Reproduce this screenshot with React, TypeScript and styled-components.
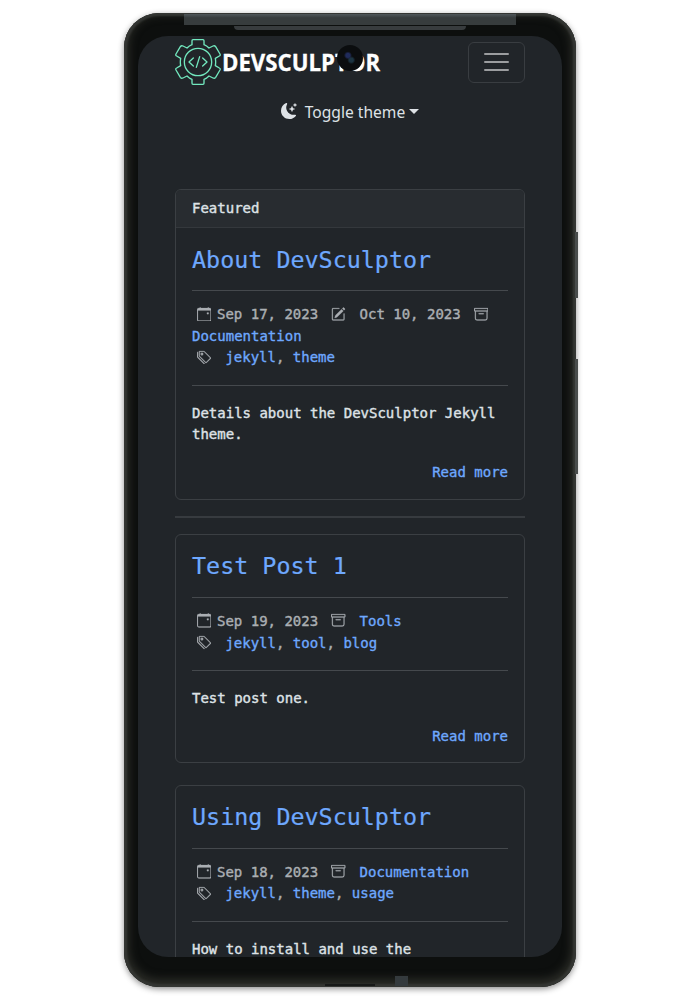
import React from 'react';
import styled, { createGlobalStyle } from 'styled-components';
import { BsArchive, BsCalendarEvent, BsMoonStarsFill, BsPencilSquare, BsTags } from 'react-icons/bs';

const GlobalStyle = createGlobalStyle`
  * { box-sizing: border-box; }
  body { margin: 0; background: #fff; overflow: hidden; }
`;

const Stage = styled.main`
  display: flex;
  justify-content: center;
  height: 1000px;
  padding-top: 13px;
`;

const Phone = styled.div`
  position: relative;
  width: 452px;
  height: 974px;
  padding: 23px 14px 30px;
  border-radius: 35px;
  background: #0d0f0e;
  box-shadow: inset 0 0 2px 3px #343633, inset 0 -3px 8px 5px #2b2c27, 0 2px 6px rgba(0, 0, 0, 0.45);
`;

const Trim = styled.div<{ $x: number; $y: number; $w: number; $h: number; $c?: string; $r?: string }>`
  position: absolute;
  left: ${p => p.$x}px;
  top: ${p => p.$y}px;
  width: ${p => p.$w}px;
  height: ${p => p.$h}px;
  background: ${p => p.$c ?? '#484c4b'};
  border-radius: ${p => p.$r ?? '0'};
`;

const Screen = styled.div`
  height: 921px;
  padding: 0 37px;
  overflow: hidden;
  border-radius: 30px;
  background: #212529;
  color: #dee2e6;
  font-family: 'DejaVu Sans Mono', monospace;
  font-size: 14px;
  line-height: 21.7px;
`;

const Camera = styled.div`
  position: absolute;
  left: 213px;
  top: 32px;
  width: 26px;
  height: 26px;
  border-radius: 50%;
  background: radial-gradient(circle at 42% 40%, #202b5b 0 2px, transparent 4px),
    radial-gradient(circle at 55% 58%, #1c3442 0 2px, transparent 4px), #0b0d0f;
`;

const NavBar = styled.header`
  display: flex;
  align-items: center;
  justify-content: space-between;
  height: 52px;
`;

const Brand = styled.div`
  display: flex;
  align-items: center;
  gap: 1px;
`;

const BrandName = styled.span`
  width: 160px;
  color: #fff;
  font: 700 23px/30px 'Open Sans', sans-serif;
  white-space: nowrap;
  transform: scaleX(0.965);
  transform-origin: left;
  -webkit-text-stroke: 0.3px;
`;

const MenuButton = styled.button`
  display: flex;
  flex-direction: column;
  align-items: center;
  justify-content: center;
  gap: 6px;
  width: 57px;
  height: 41px;
  padding: 0;
  border: 1px solid #393d41;
  border-radius: 6px;
  background: none;
`;

const MenuLine = styled.span`
  width: 25px;
  height: 2px;
  border-radius: 1px;
  background: #9b9d9f;
`;

const ThemeToggle = styled.div`
  display: flex;
  align-items: center;
  justify-content: center;
  height: 46px;
  margin-bottom: 55px;
  font: 400 15.6px/24px 'Noto Sans', sans-serif;
`;

const ToggleLabel = styled.span`
  margin: 1px 4px 0 8px;
`;

const Caret = styled.span`
  border: 5px solid transparent;
  border-top-color: #dee2e6;
  border-bottom: 0;
`;

const Card = styled.article`
  margin-bottom: 21.5px;
  border: 1px solid #3b3f43;
  border-radius: 6px;
`;

const CardHeader = styled.div`
  height: 38px;
  padding: 8px 16px;
  border-bottom: 1px solid #34383c;
  border-radius: 5px 5px 0 0;
  background: #282c30;
  -webkit-text-stroke: 0.4px;
`;

const CardBody = styled.div`
  padding: 0 16px 15px;
  -webkit-text-stroke: 0.4px;
`;

const Title = styled.h2`
  display: flex;
  align-items: center;
  height: 62px;
  margin: 0;
  padding-top: 3px;
  color: #6ea8fe;
  font-size: 23.36px;
  font-weight: 400;
  -webkit-text-stroke: 0.2px;
`;

const Rule = styled.hr`
  height: 1px;
  margin: 0;
  border: 0;
  background: #45494d;
`;

const Meta = styled.div`
  padding: 13px 0 15.6px;
  color: #abafb3;
`;

const MetaLine = styled.div`
  svg {
    width: 14.4px;
    height: 14.4px;
    vertical-align: -2px;
    stroke-width: 0.2;
  }
`;

const MetaIcon = styled.span<{ $before: number; $after: number }>`
  display: inline-block;
  height: 16px;
  line-height: 16px;
  margin: 0 ${p => p.$after}px 0 ${p => p.$before}px;
`;

const Link = styled.a`
  color: #6ea8fe;
  -webkit-text-stroke: 0.35px;
`;

const Excerpt = styled.p`
  margin: 17px 0 16px;
`;

const ReadMore = styled(Link)`
  display: block;
  text-align: right;
`;

const SectionRule = styled(Rule)`
  height: 2px;
  margin: -5.5px 0 16px;
  background: #373b3f;
`;

function Gear() {
  return (
    <svg width="46" height="48" viewBox="8 6 138 144" fill="none" stroke="#72e8be" strokeWidth="4" strokeLinejoin="round" strokeLinecap="round">
      <path d="M60 11H90Q93 11 93 14V26Q101 29 108 36L120 30Q125 28 128 32L141 54Q143 58 139 60L127 67Q129 78 127 89L139 96Q143 98 141 102L128 124Q125 128 120 126L108 120Q101 127 93 130V142Q93 145 90 145H60Q57 145 57 142V130Q49 127 42 120L30 126Q25 128 22 124L9 102Q7 98 11 96L23 89Q21 78 23 67L11 60Q7 58 9 54L22 32Q25 28 30 30L42 36Q49 29 57 26V14Q57 11 60 11Z" transform="translate(2 0)" />
      <circle cx="77" cy="78" r="41" />
      <path d="m63 66-13 12 13 12m28-24 13 12-13 12m-9-28-10 32" />
    </svg>
  );
}

type Post = { title: string; date: string; updated?: string; category: string; tags: string[]; excerpt: string; featured?: boolean; more?: boolean };

const posts: Post[] = [
  { title: 'About DevSculptor', date: 'Sep 17, 2023', updated: 'Oct 10, 2023', category: 'Documentation', tags: ['jekyll', 'theme'], excerpt: 'Details about the DevSculptor Jekyll theme.', featured: true, more: true },
  { title: 'Test Post 1', date: 'Sep 19, 2023', category: 'Tools', tags: ['jekyll', 'tool', 'blog'], excerpt: 'Test post one.', more: true },
  { title: 'Using DevSculptor', date: 'Sep 18, 2023', category: 'Documentation', tags: ['jekyll', 'theme', 'usage'], excerpt: 'How to install and use the' },
];

function PostCard({ post }: { post: Post }) {
  return (
    <Card>
      {post.featured && <CardHeader>Featured</CardHeader>}
      <CardBody>
        <Title>{post.title}</Title>
        <Rule />
        <Meta>
          <MetaLine>
            <MetaIcon $before={5} $after={5.6}><BsCalendarEvent /></MetaIcon>{post.date}
            {post.updated && <><MetaIcon $before={13} $after={14}><BsPencilSquare /></MetaIcon>{post.updated}</>}
            <MetaIcon $before={13} $after={post.updated ? 0 : 14}><BsArchive /></MetaIcon>
            {post.updated && <br />}
            <Link>{post.category}</Link>
          </MetaLine>
          <MetaLine>
            <MetaIcon $before={5} $after={14}><BsTags /></MetaIcon>
            {post.tags.map((tag, i) => <React.Fragment key={tag}>{i > 0 && ', '}<Link>{tag}</Link></React.Fragment>)}
          </MetaLine>
        </Meta>
        <Rule />
        <Excerpt>{post.excerpt}</Excerpt>
        {post.more && <ReadMore>Read more</ReadMore>}
      </CardBody>
    </Card>
  );
}

export default function App() {
  return (
    <Stage>
      <GlobalStyle />
      <Phone>
        <Trim $x={60} $y={1} $w={332} $h={11} $c="linear-gradient(#50575a, #373c3d 35%)" />
        <Trim $x={110} $y={13} $w={232} $h={4} $c="#383c3e" $r="0 0 4px 4px" />
        <Trim $x={451} $y={219} $w={3} $h={66} />
        <Trim $x={451} $y={346} $w={3} $h={115} />
        <Trim $x={201} $y={971} $w={50} $h={2} $c="#171918" />
        <Trim $x={271} $y={963} $w={13} $h={10} $c="#343a3d" />
        <Screen>
          <NavBar>
            <Brand><Gear /><BrandName>DEVSCULPTOR</BrandName></Brand>
            <MenuButton aria-label="Menu"><MenuLine /><MenuLine /><MenuLine /></MenuButton>
          </NavBar>
          <ThemeToggle><BsMoonStarsFill size={16} /><ToggleLabel>Toggle theme</ToggleLabel><Caret /></ThemeToggle>
          {posts.map(post => (
            <React.Fragment key={post.title}>
              <PostCard post={post} />
              {post.featured && <SectionRule />}
            </React.Fragment>
          ))}
        </Screen>
        <Camera />
      </Phone>
    </Stage>
  );
}
